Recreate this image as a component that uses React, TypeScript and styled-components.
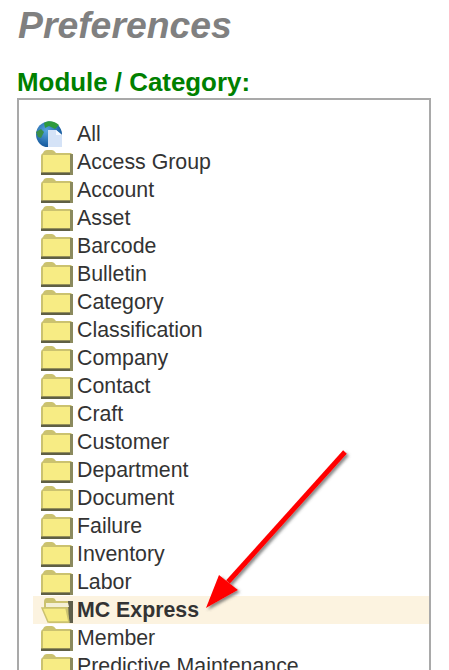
import React from 'react'
import styled, { createGlobalStyle } from 'styled-components'

const GlobalStyle = createGlobalStyle`
  html, body {
    margin: 0;
    padding: 0;
    height: 670px;
    overflow: hidden;
    background: #fff;
  }
`

const modules = [
  'Access Group',
  'Account',
  'Asset',
  'Barcode',
  'Bulletin',
  'Category',
  'Classification',
  'Company',
  'Contact',
  'Craft',
  'Customer',
  'Department',
  'Document',
  'Failure',
  'Inventory',
  'Labor',
  'MC Express',
  'Member',
  'Predictive Maintenance',
]

const FolderIcon = () => (
  <FolderSvg viewBox="0 0 32 26">
    <path d="M0 7 Q0 5 2 4 Q3 1 6 1 L11 1 Q13 1 15 4 L30 4 L32 6 L32 26 L0 26 Z" fill="#cbc26f" />
    <rect x="2" y="6" width="27" height="17" fill="#f7ec84" />
    <path d="M0 23.5 H32 V26 H0 Z" fill="#5f5f44" />
    <path d="M29 5 H32 V26 H29 Z" fill="#8b8a5e" />
  </FolderSvg>
)

const OpenFolderIcon = () => (
  <FolderSvg viewBox="0 0 32 26">
    <path d="M3 5 Q3 1 6 1 L12 1 Q14 1 15 4 L30 4 L32 6 L32 26 L8 26 L3 16 Z" fill="#cbc26f" />
    <path d="M27 4 H32 V26 H28 Z" fill="#5f5f4a" />
    <path d="M5 6 H27 L28 10 H5 Z" fill="#f4f0d6" />
    <path d="M1 11 H25 L28 25 H7 Z" fill="#f7ec84" stroke="#cbc26f" strokeWidth="1.5" />
  </FolderSvg>
)

const GlobeIcon = () => (
  <GlobeSvg viewBox="0 0 28 26">
    <defs>
      <radialGradient id="globe" cx="40%" cy="35%" r="70%">
        <stop offset="0%" stopColor="#58a6e0" />
        <stop offset="100%" stopColor="#0d4f94" />
      </radialGradient>
      <filter id="soft">
        <feGaussianBlur stdDeviation="0.5" />
      </filter>
    </defs>
    <g filter="url(#soft)">
      <circle cx="14" cy="13.5" r="13" fill="url(#globe)" />
      <path d="M9 2 C13 -1 20 0 24 4 L20 8 L14 5 L10 7 Z" fill="#2f9a3e" />
      <path d="M1 11 L6 8 L9 11 L6 17 L3 16 Z" fill="#3a8f4a" />
      <path d="M13 9 H21 L27 14 V26 H13 Z" fill="#d5e3f7" />
      <path d="M21 9 V14 H27 Z" fill="#f4f8fe" />
    </g>
  </GlobeSvg>
)

export default function App() {
  return (
    <>
      <GlobalStyle />
      <Page>
        <Title>Preferences</Title>
        <SectionLabel>Module / Category:</SectionLabel>
        <TreeBox>
          <Row>
            <IconCell>
              <GlobeIcon />
            </IconCell>
            <Label>All</Label>
          </Row>
          {modules.map((name) => {
            const selected = name === 'MC Express'
            return (
              <Row key={name} $selected={selected}>
                <IconCell $folder>
                  {selected ? <OpenFolderIcon /> : <FolderIcon />}
                </IconCell>
                <Label $selected={selected}>{name}</Label>
              </Row>
            )
          })}
        </TreeBox>
        <Arrow viewBox="0 0 160 170">
          <defs>
            <filter id="arrowShadow" x="-20%" y="-20%" width="140%" height="140%">
              <feDropShadow dx="2" dy="2" stdDeviation="1.5" floodColor="#555" floodOpacity="0.7" />
            </filter>
          </defs>
          <g filter="url(#arrowShadow)" fill="#ff0000">
            <path d="M145 10 L28 140" stroke="#ff0000" strokeWidth="5" fill="none" />
            <path d="M6 166 L19 133 L38 148 Z" />
          </g>
        </Arrow>
      </Page>
    </>
  )
}

const Page = styled.div`
  position: relative;
  height: 670px;
  overflow: hidden;
  padding: 0 18px 0 17px;
  font-family: 'Liberation Sans', Arial, sans-serif;
`

const Title = styled.h1`
  margin: 0;
  padding: 5px 0 0 1px;
  font-size: 37.33px;
  line-height: 40px;
  font-weight: 700;
  font-style: italic;
  color: #808080;
`

const SectionLabel = styled.h2`
  margin: 0;
  padding: 22px 0 1px;
  font-size: 25.9px;
  line-height: 30px;
  font-weight: 700;
  color: #008000;
`

const TreeBox = styled.div`
  border: 2px solid #a9a9a9;
  padding: 20px 0 40px 14px;
  width: 396px;
`

const Row = styled.div<{ $selected?: boolean }>`
  display: flex;
  align-items: center;
  height: 28px;
  background: ${(p) => (p.$selected ? '#fcf3e0' : 'transparent')};
`

const IconCell = styled.div<{ $folder?: boolean }>`
  width: 44px;
  flex: none;
  display: flex;
  padding-left: ${(p) => (p.$folder ? '8px' : '2px')};
  box-sizing: border-box;
`

const FolderSvg = styled.svg`
  width: 32px;
  height: 26px;
  display: block;
`

const GlobeSvg = styled.svg`
  width: 28px;
  height: 26px;
  display: block;
`

const Label = styled.span<{ $selected?: boolean }>`
  font-size: 21.33px;
  line-height: 28px;
  white-space: nowrap;
  color: #333;
  font-weight: ${(p) => (p.$selected ? 700 : 400)};
`

const Arrow = styled.svg`
  position: absolute;
  left: 200px;
  top: 442px;
  width: 160px;
  height: 170px;
`
